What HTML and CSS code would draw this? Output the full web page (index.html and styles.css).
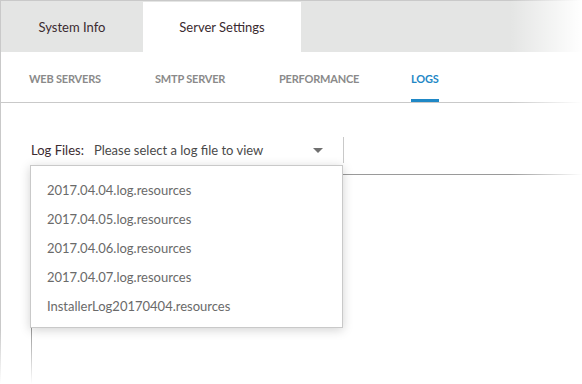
FILE: index.html
```html
<!DOCTYPE html>
<html lang="en">
<head>
    <meta charset="UTF-8">
    <title>Server Settings - Logs</title>
    <link rel="stylesheet" href="styles.css">
</head>
<body>
    <div class="frame">
        <div class="tabs">
            <div class="tab">System Info</div>
            <div class="tab active">Server Settings</div>
        </div>

        <div class="subnav">
            <a class="subnav-item">WEB SERVERS</a>
            <a class="subnav-item">SMTP SERVER</a>
            <a class="subnav-item">PERFORMANCE</a>
            <a class="subnav-item current">LOGS</a>
        </div>

        <div class="content">
            <div class="log-row">
                <label class="log-label">Log Files:</label>
                <div class="select">
                    <span class="select-text">Please select a log file to view</span>
                    <span class="caret"></span>
                    <ul class="menu">
                        <li>2017.04.04.log.resources</li>
                        <li>2017.04.05.log.resources</li>
                        <li>2017.04.06.log.resources</li>
                        <li>2017.04.07.log.resources</li>
                        <li>InstallerLog20170404.resources</li>
                    </ul>
                </div>
            </div>
            <div class="log-view"></div>
        </div>
    </div>
</body>
</html>
```

FILE: styles.css
```css
:root {
    --tab-bg: #e4e5e4;
    --line: #c9c9c9;
    --dark: #3b2b30;
    --muted: #8a8a8a;
    --blue: #1f88c6;
}
html, body {
    margin: 0;
    height: 100%;
}
body {
    font-family: 'Lato', 'Open Sans', sans-serif;
    background: #fff;
    overflow: hidden;
    position: relative;
}
/* soft fade toward the right and bottom edges */
body::after {
    content: '';
    position: absolute;
    inset: 0;
    pointer-events: none;
    background:
        linear-gradient(to right, rgba(255,255,255,0) 510px, #fff 582px),
        linear-gradient(to bottom, rgba(255,255,255,0) 330px, #fff 384px);
}
.frame {
    height: 100%;
    border-top: 1px solid var(--line);
    border-left: 1px solid var(--line);
    box-sizing: border-box;
}
.tabs {
    display: flex;
    height: 51px;
    background: var(--tab-bg);
}
.tab {
    width: 142px;
    display: flex;
    align-items: center;
    justify-content: center;
    font-size: 13px;
    color: var(--dark);
}
.tab.active {
    width: 158px;
    background: #fff;
    margin-top: 1px;
}
.subnav {
    display: grid;
    grid-template-columns: 126px 124px 132px auto;
    justify-content: start;
    height: 50px;
    padding-left: 28px;
    border-bottom: 1px solid var(--line);
}
.subnav-item {
    display: flex;
    align-items: center;
    justify-self: start;
    font-size: 11px;
    font-weight: 700;
    letter-spacing: -0.2px;
    color: var(--muted);
    border-bottom: 3px solid transparent;
    padding-top: 5px;
}
.subnav-item.current {
    color: var(--blue);
    border-bottom-color: var(--blue);
}
.content {
    padding: 34px 0 0 30px;
}
.log-row {
    display: flex;
    align-items: center;
    height: 26px;
}
.log-label {
    font-size: 13px;
    color: var(--dark);
    margin-right: 10px;
}
.select {
    position: relative;
    width: 249px;
    height: 26px;
    display: flex;
    align-items: center;
    border-right: 1px solid var(--line);
    font-size: 13px;
    color: #4a4a4a;
}
.select-text {
    flex: 1;
}
.caret {
    width: 0;
    height: 0;
    border-left: 5px solid transparent;
    border-right: 5px solid transparent;
    border-top: 5px solid #707070;
    margin-right: 20px;
}
.menu {
    position: absolute;
    top: 28px;
    left: -64px;
    width: 311px;
    margin: 0;
    padding: 10px 0 6px;
    list-style: none;
    background: #fff;
    border: 1px solid var(--line);
    box-shadow: 0 2px 10px rgba(0, 0, 0, 0.18);
    z-index: 2;
}
.menu li {
    height: 29px;
    line-height: 29px;
    padding-left: 16px;
    color: #6a6a6a;
    font-size: 13px;
}
.log-view {
    margin-top: 11px;
    height: 220px;
    border-top: 1px solid #9a9a9a;
    border-left: 1px solid #9a9a9a;
}
```
